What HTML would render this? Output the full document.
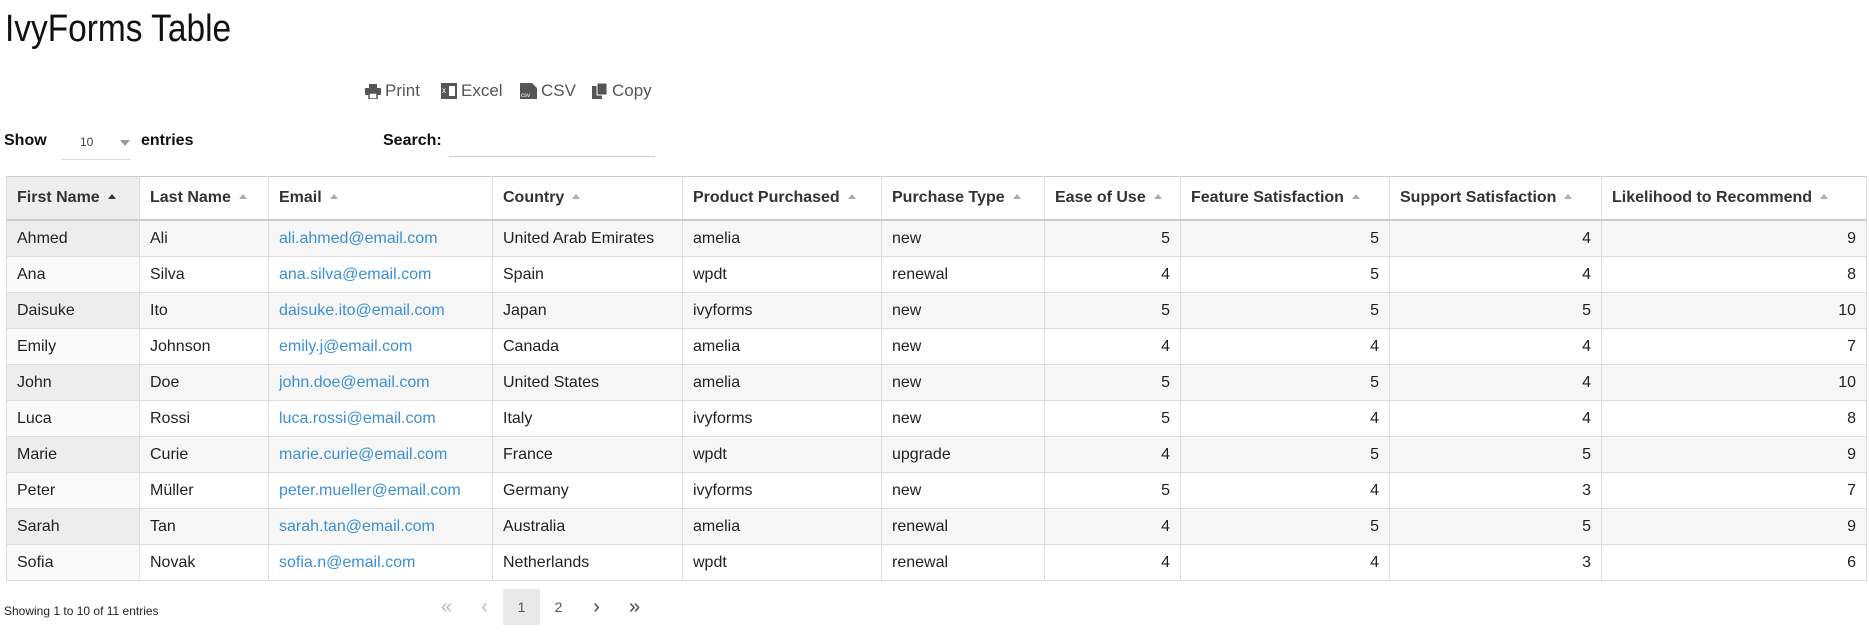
<!DOCTYPE html>
<html><head><meta charset="utf-8"><style>
body{margin:0;background:#fff;font-family:"Liberation Sans",sans-serif;color:#222;width:1869px;height:635px;overflow:hidden;position:relative}
.abs{position:absolute}
h1{position:absolute;left:5px;top:8px;margin:0;font-weight:normal;font-size:38px;transform:scaleX(0.88);transform-origin:left;color:#111}
.btn{position:absolute;top:81px;font-size:17px;color:#555;display:flex;align-items:center;gap:4px}
.lbl{font-weight:bold;font-size:16px;color:#111;top:132px}
table{position:absolute;left:6px;top:176px;border-collapse:collapse;table-layout:fixed;width:1860px;font-size:16px}
th,td{border:1px solid #ddd;padding:0 10px;white-space:nowrap;overflow:hidden}
th{height:42px;text-align:left;font-weight:bold;color:#333;border-bottom:2px solid #ccc;border-top:1px solid #ccc}
th:after{content:"";display:inline-block;margin-left:8px;border:4px solid transparent;border-bottom:5px solid #aaa;border-top:0;vertical-align:3px}
th.s{background:#eee}th.s:after{border-bottom-color:#333}
td{height:35px}
tbody tr:nth-child(odd) td{background:#f6f6f6}
tbody tr:nth-child(odd) td:first-child{background:#ededed}
tbody tr:nth-child(even) td:first-child{background:#fafafa}
td.n{text-align:right}
td a{color:#3b8fd5;text-decoration:none}
.pg{position:absolute;top:589px;height:36px;width:37px;text-align:center;line-height:36px;font-size:14px;color:#555}
</style></head><body>
<h1>IvyForms Table</h1>
<div class="btn" style="left:365px"><svg width="16" height="15" viewBox="0 0 16 15"><rect x="4" y="0" width="8" height="4" fill="#555"/><rect x="0" y="4" width="16" height="7" rx="1" fill="#555"/><rect x="4" y="9" width="8" height="6" fill="#fff" stroke="#555" stroke-width="1.5"/></svg>Print</div>
<div class="btn" style="left:441px"><svg width="16" height="16" viewBox="0 0 16 16"><rect x="0" y="0" width="16" height="16" fill="#555"/><text x="1" y="10" font-size="8" fill="#fff" font-family="Liberation Sans">x</text><rect x="8" y="3" width="6" height="10" fill="#fff"/></svg>Excel</div>
<div class="btn" style="left:520px"><svg width="17" height="16" viewBox="0 0 17 16"><path d="M0 0h12l5 5v11H0z" fill="#555"/><text x="1" y="14" font-size="6" fill="#fff" font-family="Liberation Sans">csv</text></svg>CSV</div>
<div class="btn" style="left:592px"><svg width="16" height="16" viewBox="0 0 16 16"><rect x="0" y="3" width="10" height="13" fill="#555"/><rect x="5" y="0" width="10" height="12" fill="#555" stroke="#fff"/></svg>Copy</div>
<div class="abs lbl" style="left:4px">Show</div>
<div class="abs" style="left:61px;top:124px;width:70px;height:35px;border-bottom:1px solid #ddd"></div>
<div class="abs" style="left:80px;top:135px;font-size:12px;color:#444">10</div>
<div class="abs" style="left:120px;top:140px;border:5px solid transparent;border-top:6px solid #999;border-bottom:0"></div>
<div class="abs lbl" style="left:141px">entries</div>
<div class="abs lbl" style="left:383px">Search:</div>
<div class="abs" style="left:449px;top:156px;width:206px;border-bottom:1px solid #ccc"></div>
<table>
<colgroup><col style="width:133px"><col style="width:129px"><col style="width:224px"><col style="width:190px"><col style="width:199px"><col style="width:163px"><col style="width:136px"><col style="width:209px"><col style="width:212px"><col style="width:265px"></colgroup>
<thead><tr><th class="s">First Name</th><th>Last Name</th><th>Email</th><th>Country</th><th>Product Purchased</th><th>Purchase Type</th><th>Ease of Use</th><th>Feature Satisfaction</th><th>Support Satisfaction</th><th>Likelihood to Recommend</th></tr></thead>
<tbody>
<tr><td>Ahmed</td><td>Ali</td><td><a>ali.ahmed@email.com</a></td><td>United Arab Emirates</td><td>amelia</td><td>new</td><td class="n">5</td><td class="n">5</td><td class="n">4</td><td class="n">9</td></tr>
<tr><td>Ana</td><td>Silva</td><td><a>ana.silva@email.com</a></td><td>Spain</td><td>wpdt</td><td>renewal</td><td class="n">4</td><td class="n">5</td><td class="n">4</td><td class="n">8</td></tr>
<tr><td>Daisuke</td><td>Ito</td><td><a>daisuke.ito@email.com</a></td><td>Japan</td><td>ivyforms</td><td>new</td><td class="n">5</td><td class="n">5</td><td class="n">5</td><td class="n">10</td></tr>
<tr><td>Emily</td><td>Johnson</td><td><a>emily.j@email.com</a></td><td>Canada</td><td>amelia</td><td>new</td><td class="n">4</td><td class="n">4</td><td class="n">4</td><td class="n">7</td></tr>
<tr><td>John</td><td>Doe</td><td><a>john.doe@email.com</a></td><td>United States</td><td>amelia</td><td>new</td><td class="n">5</td><td class="n">5</td><td class="n">4</td><td class="n">10</td></tr>
<tr><td>Luca</td><td>Rossi</td><td><a>luca.rossi@email.com</a></td><td>Italy</td><td>ivyforms</td><td>new</td><td class="n">5</td><td class="n">4</td><td class="n">4</td><td class="n">8</td></tr>
<tr><td>Marie</td><td>Curie</td><td><a>marie.curie@email.com</a></td><td>France</td><td>wpdt</td><td>upgrade</td><td class="n">4</td><td class="n">5</td><td class="n">5</td><td class="n">9</td></tr>
<tr><td>Peter</td><td>Müller</td><td><a>peter.mueller@email.com</a></td><td>Germany</td><td>ivyforms</td><td>new</td><td class="n">5</td><td class="n">4</td><td class="n">3</td><td class="n">7</td></tr>
<tr><td>Sarah</td><td>Tan</td><td><a>sarah.tan@email.com</a></td><td>Australia</td><td>amelia</td><td>renewal</td><td class="n">4</td><td class="n">5</td><td class="n">5</td><td class="n">9</td></tr>
<tr><td>Sofia</td><td>Novak</td><td><a>sofia.n@email.com</a></td><td>Netherlands</td><td>wpdt</td><td>renewal</td><td class="n">4</td><td class="n">4</td><td class="n">3</td><td class="n">6</td></tr>
</tbody></table>
<div class="abs" style="left:4px;top:604px;font-size:12px;color:#222">Showing 1 to 10 of 11 entries</div>
<div class="pg" style="left:428px;color:#bbb;font-size:20px">«</div>
<div class="pg" style="left:466px;color:#bbb;font-size:20px">‹</div>
<div class="pg" style="left:503px;background:#e9e9e9">1</div>
<div class="pg" style="left:540px">2</div>
<div class="pg" style="left:578px;font-size:20px;color:#444">›</div>
<div class="pg" style="left:616px;font-size:20px;color:#444">»</div>
</body></html>
